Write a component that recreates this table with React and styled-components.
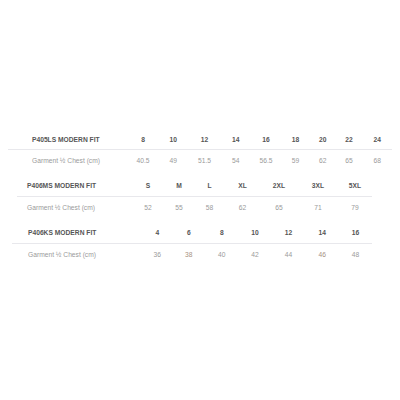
import React from "react";
import styled, { createGlobalStyle } from "styled-components";

const GlobalStyle = createGlobalStyle`
  html, body {
    margin: 0;
    padding: 0;
    background: #fff;
  }
  body {
    font-family: "Liberation Sans", Arial, sans-serif;
  }
`;

const Page = styled.div`
  width: 400px;
  height: 400px;
  padding-top: 129px;
  box-sizing: border-box;
  display: flex;
  flex-direction: column;
`;

const Table = styled.div`
  display: grid;
  grid-template-columns: ${({ $cols }) => $cols};
  margin-left: ${({ $left }) => $left}px;
  margin-top: ${({ $top }) => $top}px;
  width: max-content;
`;

const HeadCell = styled.div`
  height: ${({ $h }) => $h}px;
  display: flex;
  align-items: center;
  justify-content: ${({ $label }) => ($label ? "flex-start" : "center")};
  padding-left: ${({ $pad }) => $pad || 0}px;
  font-size: 6.7px;
  font-weight: 700;
  color: #555;
  border-bottom: 1px solid #e8e8ec;
  white-space: nowrap;
`;

const DataCell = styled.div`
  height: ${({ $h }) => $h}px;
  display: flex;
  align-items: center;
  justify-content: ${({ $label }) => ($label ? "flex-start" : "center")};
  padding-left: ${({ $pad }) => $pad || 0}px;
  font-size: 6.7px;
  color: ${({ $warm }) => ($warm ? "#a8917f" : "#9a9a9a")};
  white-space: nowrap;
`;

const tables = [
  {
    name: "P405LS MODERN FIT",
    left: 8,
    top: 0,
    pad: 24,
    label: 120,
    h: [20, 20],
    widths: [30, 30.5, 32, 30.5, 30, 29, 25.5, 27, 29.5],
    sizes: ["8", "10", "12", "14", "16", "18", "20", "22", "24"],
    values: ["40.5", "49", "51.5", "54", "56.5", "59", "62", "65", "68"],
  },
  {
    name: "P406MS MODERN FIT",
    left: 17,
    top: 5,
    pad: 10,
    label: 115,
    h: [21, 21],
    widths: [32, 30, 31, 35, 38, 40, 34],
    sizes: ["S", "M", "L", "XL", "2XL", "3XL", "5XL"],
    values: ["52", "55", "58", "62", "65", "71", "79"],
  },
  {
    name: "P406KS MODERN FIT",
    left: 12,
    top: 4,
    pad: 16,
    label: 130,
    h: [21, 20],
    widths: [30.5, 32.5, 33.5, 33, 34, 33.5, 33],
    sizes: ["4", "6", "8", "10", "12", "14", "16"],
    values: ["36", "38", "40", "42", "44", "46", "48"],
    warm: ["38", "46"],
  },
];

const SizeTable = ({ t }) => (
  <Table
    $left={t.left}
    $top={t.top}
    $cols={[t.label, ...t.widths].map((w) => `${w}px`).join(" ")}
  >
    <HeadCell $label $pad={t.pad} $h={t.h[0]}>
      {t.name}
    </HeadCell>
    {t.sizes.map((s) => (
      <HeadCell key={s} $h={t.h[0]}>
        {s}
      </HeadCell>
    ))}
    <DataCell $label $pad={t.pad} $h={t.h[1]}>
      Garment ½ Chest (cm)
    </DataCell>
    {t.values.map((v) => (
      <DataCell key={v} $h={t.h[1]} $warm={t.warm && t.warm.includes(v)}>
        {v}
      </DataCell>
    ))}
  </Table>
);

const App = () => (
  <>
    <GlobalStyle />
    <Page>
      {tables.map((t) => (
        <SizeTable key={t.name} t={t} />
      ))}
    </Page>
  </>
);

export default App;
